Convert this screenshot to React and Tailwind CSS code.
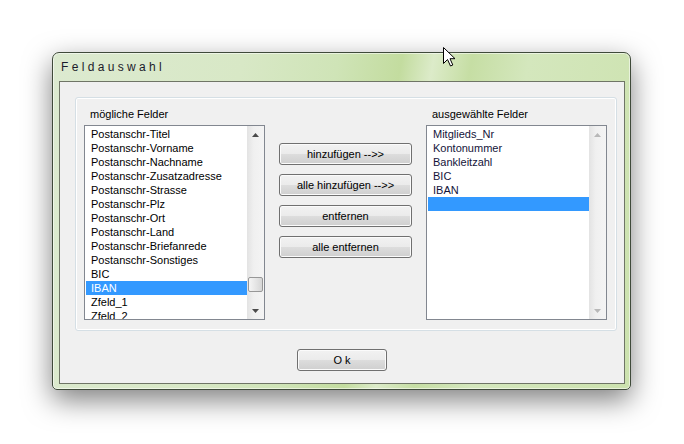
import React from "react";

const leftItems = [
  "Postanschr-Titel",
  "Postanschr-Vorname",
  "Postanschr-Nachname",
  "Postanschr-Zusatzadresse",
  "Postanschr-Strasse",
  "Postanschr-Plz",
  "Postanschr-Ort",
  "Postanschr-Land",
  "Postanschr-Briefanrede",
  "Postanschr-Sonstiges",
  "BIC",
  "IBAN",
  "Zfeld_1",
  "Zfeld_2",
];

const rightItems = ["Mitglieds_Nr", "Kontonummer", "Bankleitzahl", "BIC", "IBAN", ""];

const Arrow = ({ down, light }) => (
  <svg width="7" height="4" viewBox="0 0 7 4" className={down ? "rotate-180" : ""}>
    <path d="M0 4 L3.5 0 L7 4 Z" fill={light ? "#b8b8b8" : "#4a4a4a"} />
  </svg>
);

const ListBox = ({ items, selected, thumb, light }) => (
  <div className="w-[181px] h-[195px] border border-[#828790] bg-white flex">
    <div className="flex-1 pt-[1px] pl-[1px] overflow-hidden">
      {items.map((item, i) => (
        <div
          key={i}
          className={`h-[14px] leading-[14px] pl-[5px] whitespace-nowrap ${
            i === selected ? "bg-[#3399ff] text-white" : light ? "text-[#14143a]" : "text-black"
          }`}
        >
          {item}
        </div>
      ))}
    </div>
    <div className="w-[17px] flex flex-col bg-[linear-gradient(90deg,#e3e3e3,#f0f0f0_40%,#f4f4f4)]">
      <div className="h-[17px] flex items-center justify-center">
        <Arrow light={light} />
      </div>
      <div className="flex-1 flex flex-col justify-end">
        {thumb && (
          <div className="mx-[1px] mb-[10px] h-[15px] rounded-[2px] border border-[#979797] bg-[linear-gradient(90deg,#f5f5f5,#e6e6e6_50%,#d6d6d6)]" />
        )}
      </div>
      <div className="h-[17px] flex items-center justify-center">
        <Arrow down light={light} />
      </div>
    </div>
  </div>
);

const Button = ({ children, className = "" }) => (
  <button
    className={`h-[22px] rounded-[3px] border border-[#707070] bg-[linear-gradient(180deg,#f2f2f2_0%,#ebebeb_50%,#dddddd_51%,#cfcfcf_100%)] shadow-[inset_0_0_0_1px_#fbfbfb] text-[11px] text-black leading-[20px] ${className}`}
  >
    {children}
  </button>
);

export default function App() {
  return (
    <div
      className="relative w-[684px] h-[444px] bg-white pl-[52px] pt-[52px] overflow-hidden"
      style={{ fontFamily: '"Liberation Sans", Arial, sans-serif' }}
    >
      <div className="w-[579px] h-[338px] flex flex-col rounded-t-[7px] rounded-b-[5px] border border-[#3f4a3a] bg-[linear-gradient(100deg,#dcead0_0%,#d8e8c6_30%,#cfe4b7_45%,#c3dc9f_55%,#dcebc9_60%,#c6dea4_66%,#d4e7bd_75%,#cce2ae_100%)] shadow-[0_10px_28px_rgba(0,0,0,0.5),inset_0_0_0_1px_rgba(255,255,255,0.55)] pl-[6px] pr-[5px] pb-[5px]">
        <div className="h-[28px] flex items-center pl-[2px] text-[12px] text-[#1b1b2b] whitespace-pre">
          F e l d a u s w a h l
        </div>
        <div className="flex-1 border border-[#6f7566] bg-[#f0f0f0] flex flex-col">
          <div className="ml-[15px] mt-[15px] w-[542px] h-[234px] rounded-[3px] border border-[#d5dfe5] shadow-[inset_0_0_0_1px_#ffffff] flex pl-[8px] pt-[9px] text-[11px]">
            <div className="flex flex-col">
              <div className="h-[14px] leading-[14px] ml-[6px] mb-[4px] text-black">mögliche Felder</div>
              <ListBox items={leftItems} selected={11} thumb />
            </div>
            <div className="w-[133px] mx-[14px] pt-[36px] flex flex-col gap-[9px]">
              <Button className="w-full">hinzufügen --&gt;&gt;</Button>
              <Button className="w-full">alle hinzufügen --&gt;&gt;</Button>
              <Button className="w-full">entfernen</Button>
              <Button className="w-full">alle entfernen</Button>
            </div>
            <div className="flex flex-col">
              <div className="h-[14px] leading-[14px] ml-[6px] mb-[4px] text-black">ausgewählte Felder</div>
              <ListBox items={rightItems} selected={5} light />
            </div>
          </div>
          <div className="flex justify-center mt-[18px]">
            <Button className="w-[90px] whitespace-pre text-[#14143a]">O k</Button>
          </div>
        </div>
      </div>

      <svg className="absolute left-[443px] top-[47px]" width="13" height="20" viewBox="0 0 13 20">
        <path
          d="M0.5 0.5 L0.5 16.5 L4.5 12.5 L7.5 19 L9.8 18 L7 11.7 L12 11.7 Z"
          fill="#ffffff"
          stroke="#000000"
          strokeWidth="1"
          strokeLinejoin="miter"
        />
      </svg>
    </div>
  );
}
